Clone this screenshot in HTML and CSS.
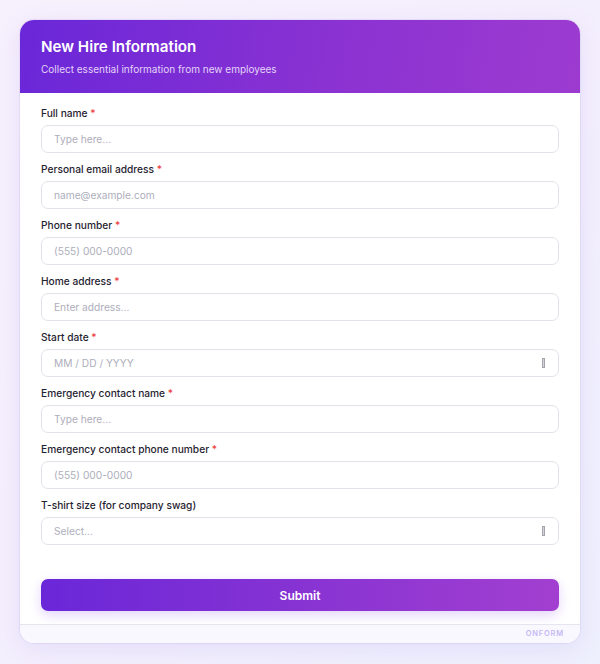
FILE: index.html
```html
<!DOCTYPE html>
<html>
<head>
    <title>New Hire Information</title>
    <link rel="stylesheet" href="styles.css">
</head>
<body>
    <div class="card">
        <div class="header">
            <h1>New Hire Information</h1>
            <p>Collect essential information from new employees</p>
        </div>
        <form class="body">
            <div class="field">
                <label>Full name <span class="req">*</span></label>
                <div class="input">Type here...</div>
            </div>
            <div class="field">
                <label>Personal email address <span class="req">*</span></label>
                <div class="input">name@example.com</div>
            </div>
            <div class="field">
                <label>Phone number <span class="req">*</span></label>
                <div class="input">(555) 000-0000</div>
            </div>
            <div class="field">
                <label>Home address <span class="req">*</span></label>
                <div class="input">Enter address...</div>
            </div>
            <div class="field">
                <label>Start date <span class="req">*</span></label>
                <div class="input">MM / DD / YYYY <span class="icon"></span></div>
            </div>
            <div class="field">
                <label>Emergency contact name <span class="req">*</span></label>
                <div class="input">Type here...</div>
            </div>
            <div class="field">
                <label>Emergency contact phone number <span class="req">*</span></label>
                <div class="input">(555) 000-0000</div>
            </div>
            <div class="field">
                <label>T-shirt size (for company swag)</label>
                <div class="input">Select... <span class="icon"></span></div>
            </div>
            <button type="button" class="submit">Submit</button>
        </form>
        <div class="footer">ONFORM</div>
    </div>
</body>
</html>
```

FILE: styles.css
```css
* {
    box-sizing: border-box;
}

body {
    margin: 0;
    height: 664px;
    padding: 20px;
    font-family: Inter, "Noto Sans", sans-serif;
    background: linear-gradient(135deg, #f7f0fd 0%, #f3effd 60%, #eef0fd 100%);
}

.card {
    background: #fff;
    border-radius: 14px;
    overflow: hidden;
    box-shadow: 0 6px 24px rgba(140, 110, 220, 0.14), 0 0 0 1px rgba(200, 180, 240, 0.25);
}

.header {
    padding: 17px 21px 17px;
    color: #fff;
    background: linear-gradient(100deg, #6a27d8 0%, #8a32d2 55%, #9d3bd0 100%);
}

.header h1 {
    margin: 0;
    font-size: 15.2px;
    line-height: 20px;
    font-weight: 600;
}

.header p {
    margin: 5px 0 0;
    font-size: 10px;
    line-height: 14px;
    color: #e4d4f8;
}

.body {
    padding: 13px 21px 13px;
    margin: 0;
}

.field {
    margin-bottom: 9px;
}

.field label {
    display: block;
    font-size: 10.2px;
    line-height: 14px;
    font-weight: 500;
    color: #1f2330;
    margin-bottom: 5px;
}

.req {
    color: #ef4444;
}

.input {
    display: flex;
    align-items: center;
    justify-content: space-between;
    height: 28px;
    padding: 0 12px;
    border: 1.5px solid #e3e1ea;
    border-radius: 7px;
    font-size: 10.2px;
    color: #adaebb;
}

.icon {
    width: 3px;
    height: 10px;
    margin-right: 1px;
    border: 1px solid #a3a3ad;
    background: #d4d4da;
}

.submit {
    display: block;
    width: 100%;
    height: 32px;
    margin-top: 34px;
    border: none;
    border-radius: 7px;
    font-family: inherit;
    font-size: 12px;
    font-weight: 600;
    color: #fff;
    background: linear-gradient(90deg, #6a27d8 0%, #8733d3 50%, #a23fd0 100%);
    box-shadow: 0 4px 12px rgba(124, 58, 237, 0.22);
}

.footer {
    height: 19px;
    padding: 4px 16px 0;
    border-top: 1px solid #e6e4ee;
    background: #f9f8fe;
    text-align: right;
    font-size: 7.5px;
    font-weight: 600;
    letter-spacing: 0.8px;
    color: #c6b8f6;
}
```
